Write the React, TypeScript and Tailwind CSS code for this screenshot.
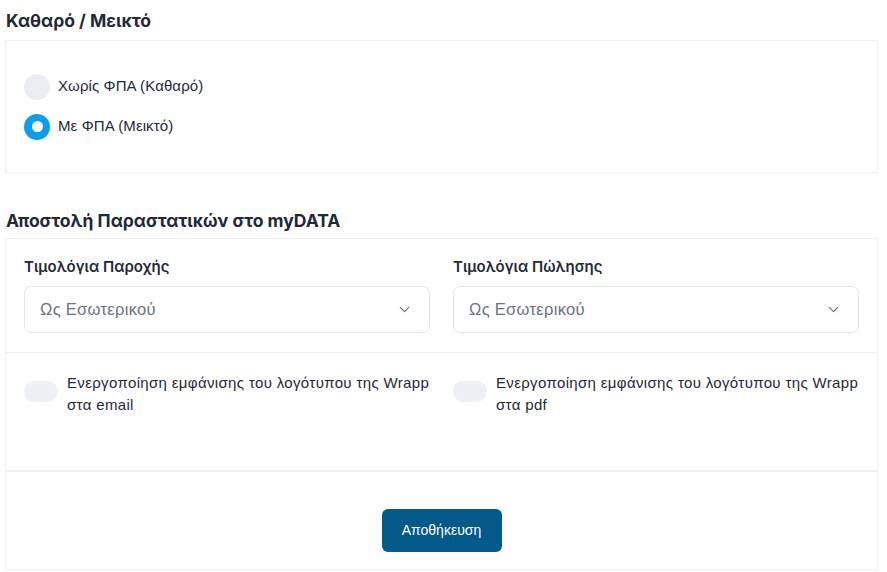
import { ChevronDown } from "lucide-react";

const body = { fontFamily: '"Liberation Sans", Arial, sans-serif' };
const heading = { fontFamily: "Inter, \"Noto Sans\", sans-serif" };

function Radio({ label, checked }: { label: string; checked?: boolean }) {
  return (
    <label className="flex items-center gap-[8px] text-[15px] tracking-[0.1px] text-[#1f2937]">
      {checked ? (
        <span className="flex h-[26px] w-[26px] items-center justify-center rounded-full bg-[#0b9ef0]">
          <span className="h-[11px] w-[11px] rounded-full bg-white" />
        </span>
      ) : (
        <span className="h-[26px] w-[26px] rounded-full bg-[#eaeef3]" />
      )}
      <span>{label}</span>
    </label>
  );
}

function SelectField({ label, value }: { label: string; value: string }) {
  return (
    <div className="flex flex-col">
      <span className="mb-[8px] text-[15px] font-semibold leading-[22px] text-[#1f2937]" style={heading}>
        {label}
      </span>
      <div className="flex h-[47px] items-center justify-between rounded-[7px] border border-[#e5e7eb] pl-[15px] pr-[16px]">
        <span className="text-[16.5px] tracking-[0.3px] text-[#6b7280]">{value}</span>
        <ChevronDown className="h-[17px] w-[17px] text-[#6b7280]" strokeWidth={1.75} />
      </div>
    </div>
  );
}

function Toggle({ label }: { label: string }) {
  return (
    <div className="flex items-start gap-[9px]">
      <span className="mt-[10px] h-[21px] w-[34px] shrink-0 rounded-full bg-[#edf0f4]" />
      <span className="mt-[1px] text-[15px] leading-[22px] tracking-[0.35px] text-[#1f2937]">{label}</span>
    </div>
  );
}

export default function App() {
  return (
    <div className="min-h-[572px] w-[887px] bg-white pl-[5px] pr-[9px]" style={body}>
      <h2 className="pl-[1px] pt-[9px] text-[17.5px] font-bold leading-[24px] text-[#1e2939]" style={heading}>
        Καθαρό / Μεικτό
      </h2>
      <section className="mt-[7px] flex h-[133px] flex-col justify-center gap-[14px] border border-[#f1f2f4] px-[18px]">
        <Radio label="Χωρίς ΦΠΑ (Καθαρό)" />
        <Radio label="Με ΦΠΑ (Μεικτό)" checked />
      </section>

      <h2 className="mt-[36px] pl-[1px] text-[17.5px] font-bold leading-[24px] text-[#1e2939]" style={heading}>
        Αποστολή Παραστατικών στο myDATA
      </h2>
      <section className="mt-[5px] border border-[#f1f2f4]">
        <div className="grid grid-cols-2 gap-[23px] px-[18px] pb-[19px] pt-[17px]">
          <SelectField label="Τιμολόγια Παροχής" value="Ως Εσωτερικού" />
          <SelectField label="Τιμολόγια Πώλησης" value="Ως Εσωτερικού" />
        </div>
        <div className="grid h-[118px] grid-cols-2 gap-[23px] border-t border-[#eef0f3] px-[18px] pt-[18px]">
          <Toggle label="Ενεργοποίηση εμφάνισης του λογότυπου της Wrapp στα email" />
          <Toggle label="Ενεργοποίηση εμφάνισης του λογότυπου της Wrapp στα pdf" />
        </div>
        <div className="flex justify-center border-t-2 border-[#edf1f6] pb-[17px] pt-[37px]">
          <button className="h-[43px] w-[120px] rounded-[6px] bg-[#04598b] text-[14px] text-white">
            Αποθήκευση
          </button>
        </div>
      </section>
    </div>
  );
}
